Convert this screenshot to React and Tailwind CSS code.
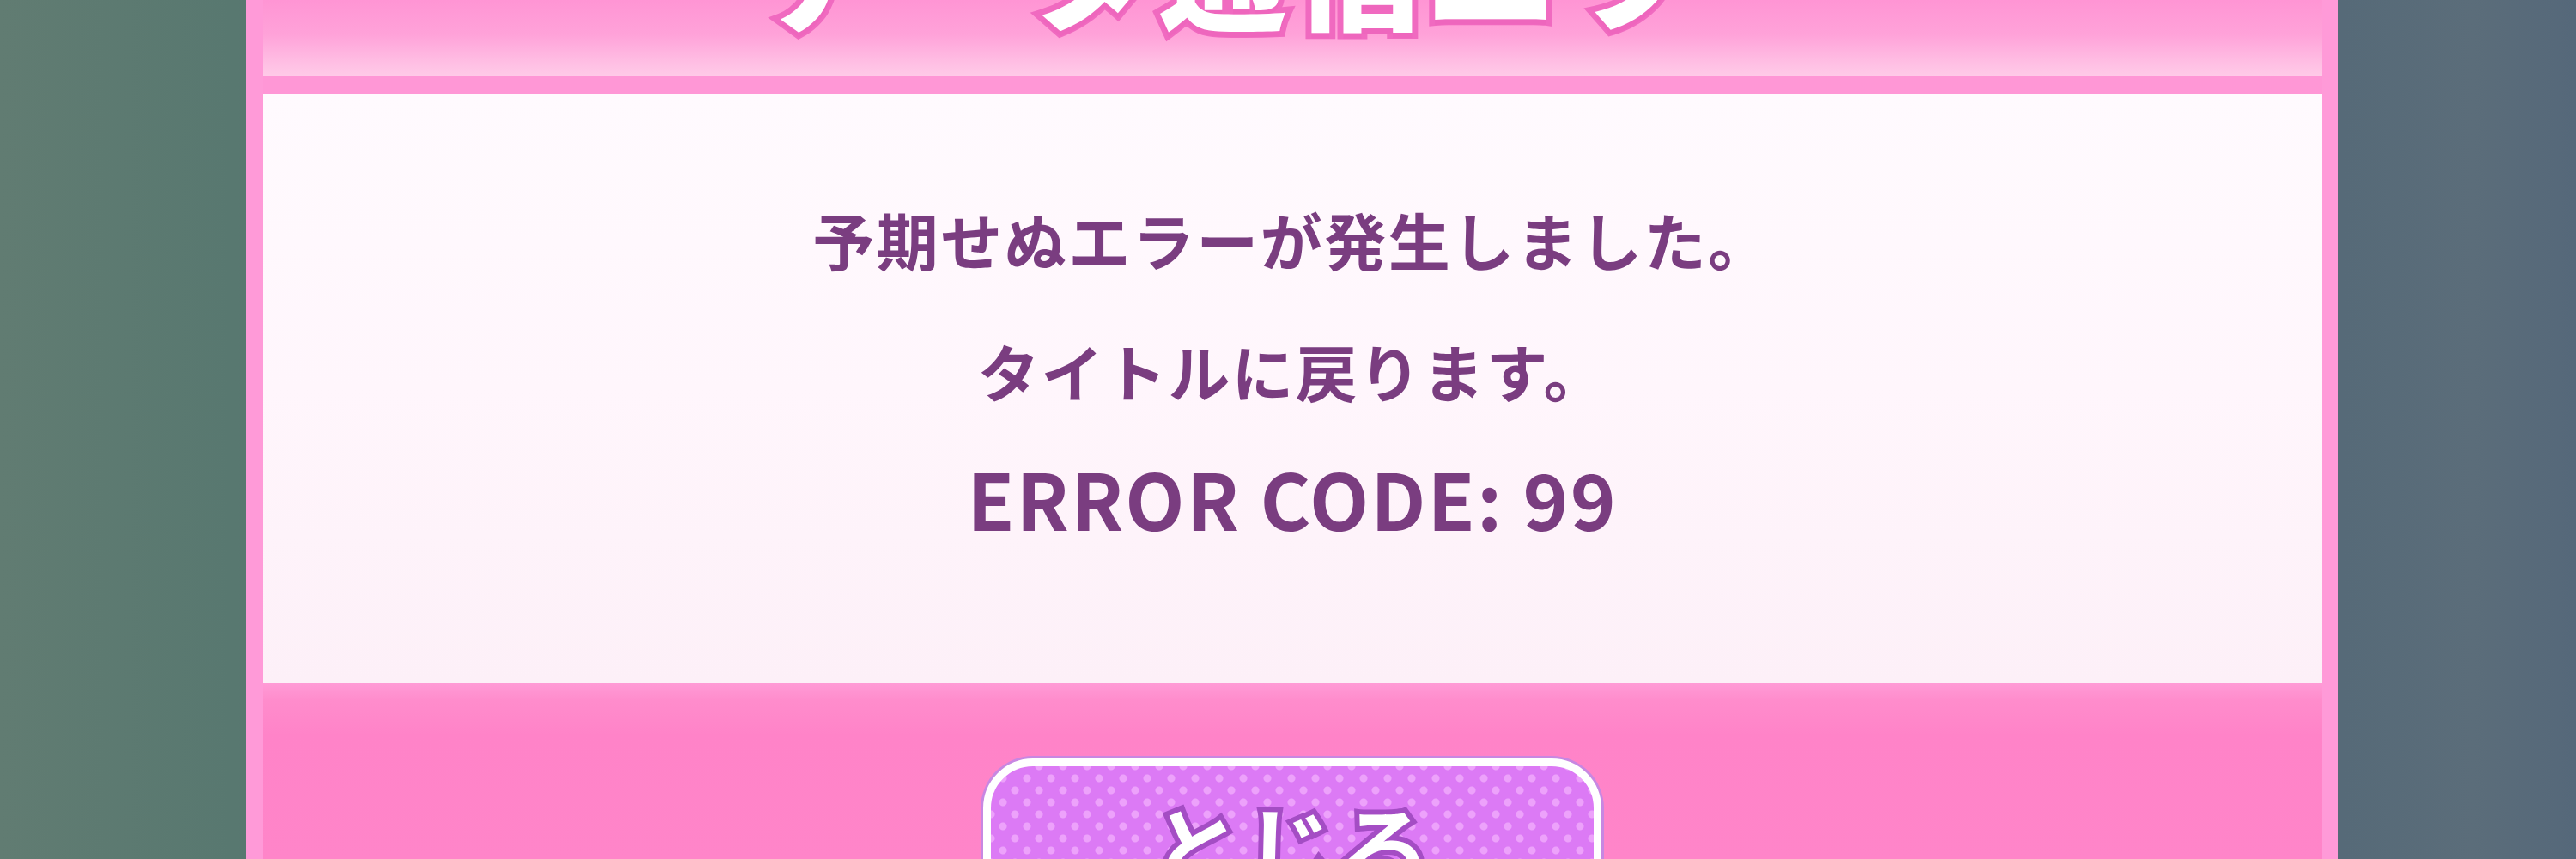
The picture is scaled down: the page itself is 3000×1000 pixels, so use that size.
import React from "react";

const jp = { fontFamily: '"Noto Sans CJK JP", "Noto Sans", sans-serif' };

export default function App() {
  return (
    <div
      className="w-[3000px] h-[1000px] overflow-hidden flex bg-[linear-gradient(90deg,#617c72_0%,#587870_9%,#5a6f76_50%,#566a78_91%,#5b6d7a_96%,#55687a_100%)]"
      style={jp}
    >
      {/* dialog frame */}
      <div className="ml-[287px] w-[2436px] h-[1000px] shrink-0 flex flex-col bg-[#ff9ad8] px-[19px] overflow-hidden">
        {/* title bar */}
        <div className="h-[89px] shrink-0 overflow-hidden flex justify-center bg-[linear-gradient(180deg,#ff95d4_0%,#ffa2d9_45%,#ffbde3_80%,#ffcbe8_100%)]">
          <div className="-mt-[116px] text-[150px] leading-none font-black tracking-[6px] text-white whitespace-nowrap [-webkit-text-stroke:14px_#f06ac0] [paint-order:stroke_fill] [text-shadow:0_6px_0_#ee66bd]">
            データ通信エラー
          </div>
        </div>
        <div className="h-[21px] shrink-0 bg-[#ff97d6]" />

        {/* message */}
        <div className="h-[685px] shrink-0 flex flex-col items-center pt-[89px] text-[#7a3d80] font-bold bg-[linear-gradient(180deg,#fffafe_0%,#fff6fc_50%,#fdf0f8_100%)]">
          <div className="h-[157px] shrink-0 flex items-center text-[72px] tracking-[2.5px] whitespace-nowrap">
            予期せぬエラーが発生しました。
          </div>
          <div className="h-[150px] shrink-0 flex items-center text-[72px] tracking-[2px] whitespace-nowrap">
            タイトルに戻ります。
          </div>
          <div className="h-[146px] shrink-0 flex items-center text-[90px] tracking-[2px] whitespace-nowrap font-semibold">
            ERROR CODE: 99
          </div>
        </div>

        {/* button area */}
        <div className="flex-1 min-h-0 overflow-hidden flex flex-col items-center bg-[linear-gradient(180deg,#ff9bd6_0%,#ff8ccc_10%,#ff83c8_30%,#ff85c9_100%)]">
          <div className="mt-[88px] w-[720px] h-[220px] shrink-0 rounded-[58px] border-[9px] border-white shadow-[0_0_0_3px_#c887e2] bg-[#dc7af5] bg-[radial-gradient(circle,#eda2fb_4px,transparent_5px),radial-gradient(circle,#eda2fb_4px,transparent_5px)] bg-[length:28px_28px] bg-[position:0_0,14px_14px] flex justify-center">
            <div className="pt-[38px] text-[106px] leading-none font-bold tracking-[4px] text-white whitespace-nowrap [-webkit-text-stroke:12px_#a44dc4] [paint-order:stroke_fill]">
              とじる
            </div>
          </div>
        </div>
      </div>
    </div>
  );
}
